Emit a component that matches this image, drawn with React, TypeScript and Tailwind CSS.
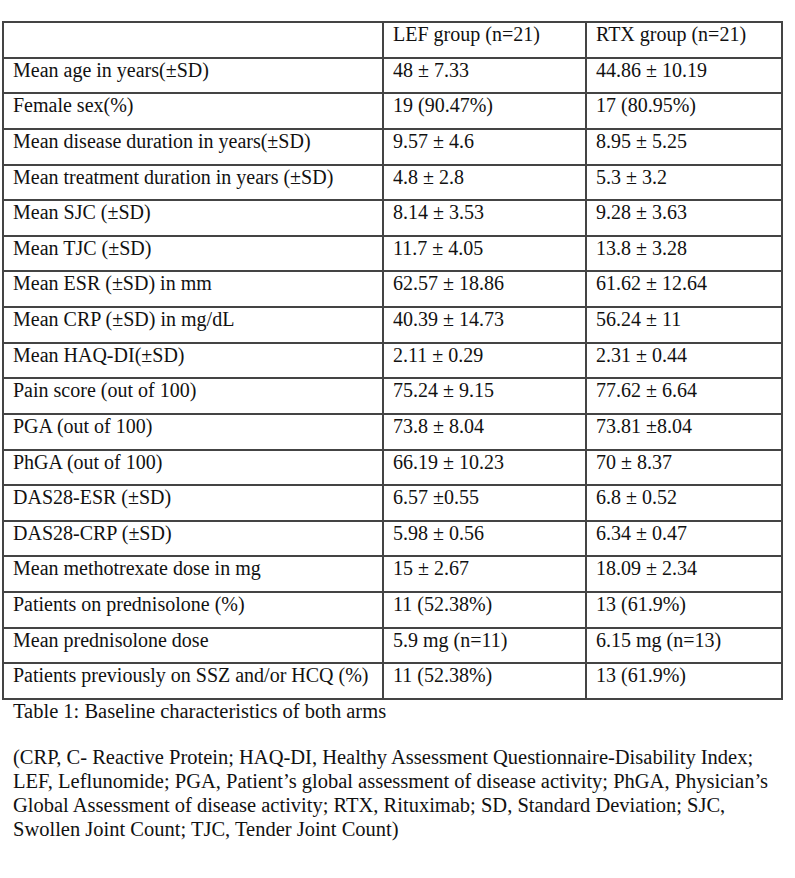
const rows: [string, string, string][] = [
  ["Mean age in years(±SD)", "48 ± 7.33", "44.86 ± 10.19"],
  ["Female sex(%)", "19 (90.47%)", "17 (80.95%)"],
  ["Mean disease duration in years(±SD)", "9.57 ± 4.6", "8.95 ± 5.25"],
  ["Mean treatment duration in years (±SD)", "4.8 ± 2.8", "5.3 ± 3.2"],
  ["Mean SJC (±SD)", "8.14 ± 3.53", "9.28 ± 3.63"],
  ["Mean TJC (±SD)", "11.7 ± 4.05", "13.8 ± 3.28"],
  ["Mean ESR (±SD) in mm", "62.57 ± 18.86", "61.62 ± 12.64"],
  ["Mean CRP (±SD) in mg/dL", "40.39 ± 14.73", "56.24 ± 11"],
  ["Mean HAQ-DI(±SD)", "2.11 ± 0.29", "2.31 ± 0.44"],
  ["Pain score (out of 100)", "75.24 ± 9.15", "77.62 ± 6.64"],
  ["PGA (out of 100)", "73.8 ± 8.04", "73.81 ±8.04"],
  ["PhGA (out of 100)", "66.19 ± 10.23", "70 ± 8.37"],
  ["DAS28-ESR (±SD)", "6.57 ±0.55", "6.8 ± 0.52"],
  ["DAS28-CRP (±SD)", "5.98 ± 0.56", "6.34 ± 0.47"],
  ["Mean methotrexate dose in mg", "15 ± 2.67", "18.09 ± 2.34"],
  ["Patients on prednisolone (%)", "11 (52.38%)", "13 (61.9%)"],
  ["Mean prednisolone dose", "5.9 mg (n=11)", "6.15 mg (n=13)"],
  ["Patients previously on SSZ and/or HCQ (%)", "11 (52.38%)", "13 (61.9%)"],
];

const cell = "h-[35.63px] border-r-2 border-b-2 border-[#444] pl-[9px] leading-[22px] whitespace-nowrap overflow-hidden";

export default function App() {
  return (
    <div
      className="w-[795px] h-[878px] bg-white text-[#111] text-[20px] pt-[21px] pl-[2px]"
      style={{ fontFamily: '"Liberation Serif", "Times New Roman", serif' }}
    >
      <div className="grid grid-cols-[380px_203px_196px] w-max border-t-2 border-l-2 border-[#444]">
        <div className={cell}></div>
        <div className={cell}>LEF group (n=21)</div>
        <div className={cell}>RTX group (n=21)</div>
        {rows.map(([label, lef, rtx]) => (
          <div key={label} className="contents">
            <div className={cell}>{label}</div>
            <div className={cell}>{lef}</div>
            <div className={cell}>{rtx}</div>
          </div>
        ))}
      </div>

      <p className="pl-[11px] text-[20.5px] leading-[22px]">Table 1: Baseline characteristics of both arms</p>

      <p className="mt-[23px] pl-[11px] text-[20.5px] leading-[24px] whitespace-nowrap">
        (CRP, C- Reactive Protein; HAQ-DI, Healthy Assessment Questionnaire-Disability Index;
        <br />
        LEF, Leflunomide; PGA, Patient’s global assessment of disease activity; PhGA, Physician’s
        <br />
        Global Assessment of disease activity; RTX, Rituximab; SD, Standard Deviation; SJC,
        <br />
        Swollen Joint Count; TJC, Tender Joint Count)
      </p>
    </div>
  );
}
